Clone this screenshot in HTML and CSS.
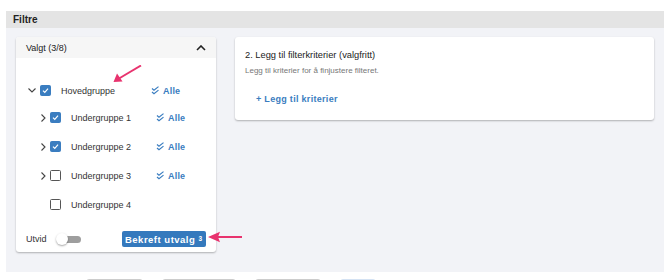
FILE: index.html
```html
<!DOCTYPE html>
<html lang="en">
<head>
    <meta charset="UTF-8">
    <meta name="viewport" content="width=device-width, initial-scale=1.0">
    <title>Filtre</title>
    <link rel="stylesheet" href="styles.css">
</head>
<body>

<div class="page">
    <!-- Section header -->
    <div class="section-title">Filtre</div>

    <div class="panel">
        <!-- Left: group selection -->
        <div class="card select-card">
            <div class="select-head">
                <span>Valgt (3/8)</span>
                <svg class="head-chevron" viewBox="0 0 10 6" width="10" height="6"><path d="M1 5 L5 1 L9 5" fill="none" stroke="#222" stroke-width="1.6"/></svg>
            </div>

            <div class="tree">
                <div class="row main-row">
                    <svg class="chev" viewBox="0 0 8 5" width="8" height="5"><path d="M0.5 0.5 L4 4 L7.5 0.5" fill="none" stroke="#444" stroke-width="1.1"/></svg>
                    <span class="box checked"><svg viewBox="0 0 10 10"><path d="M2.2 5.2 L4.2 7.2 L7.8 3" fill="none" stroke="#fff" stroke-width="1.3"/></svg></span>
                    <span class="label">Hovedgruppe</span>
                    <span class="all"><svg viewBox="0 0 9 9" width="9" height="9"><path d="M1 2.5 L3 4.3 L7.5 0.6 M1 6 L3 7.8 L7.5 4.1" fill="none" stroke="#3a7dc0" stroke-width="1.2"/></svg>Alle</span>
                </div>
                <div class="row sub-row">
                    <svg class="chev" viewBox="0 0 5 8" width="5" height="8"><path d="M0.5 0.5 L4 4 L0.5 7.5" fill="none" stroke="#444" stroke-width="1.1"/></svg>
                    <span class="box checked"><svg viewBox="0 0 10 10"><path d="M2.2 5.2 L4.2 7.2 L7.8 3" fill="none" stroke="#fff" stroke-width="1.3"/></svg></span>
                    <span class="label">Undergruppe 1</span>
                    <span class="all"><svg viewBox="0 0 9 9" width="9" height="9"><path d="M1 2.5 L3 4.3 L7.5 0.6 M1 6 L3 7.8 L7.5 4.1" fill="none" stroke="#3a7dc0" stroke-width="1.2"/></svg>Alle</span>
                </div>
                <div class="row sub-row">
                    <svg class="chev" viewBox="0 0 5 8" width="5" height="8"><path d="M0.5 0.5 L4 4 L0.5 7.5" fill="none" stroke="#444" stroke-width="1.1"/></svg>
                    <span class="box checked"><svg viewBox="0 0 10 10"><path d="M2.2 5.2 L4.2 7.2 L7.8 3" fill="none" stroke="#fff" stroke-width="1.3"/></svg></span>
                    <span class="label">Undergruppe 2</span>
                    <span class="all"><svg viewBox="0 0 9 9" width="9" height="9"><path d="M1 2.5 L3 4.3 L7.5 0.6 M1 6 L3 7.8 L7.5 4.1" fill="none" stroke="#3a7dc0" stroke-width="1.2"/></svg>Alle</span>
                </div>
                <div class="row sub-row">
                    <svg class="chev" viewBox="0 0 5 8" width="5" height="8"><path d="M0.5 0.5 L4 4 L0.5 7.5" fill="none" stroke="#444" stroke-width="1.1"/></svg>
                    <span class="box"></span>
                    <span class="label">Undergruppe 3</span>
                    <span class="all"><svg viewBox="0 0 9 9" width="9" height="9"><path d="M1 2.5 L3 4.3 L7.5 0.6 M1 6 L3 7.8 L7.5 4.1" fill="none" stroke="#3a7dc0" stroke-width="1.2"/></svg>Alle</span>
                </div>
                <div class="row sub-row">
                    <span class="chev-space"></span>
                    <span class="box"></span>
                    <span class="label">Undergruppe 4</span>
                </div>
            </div>

            <div class="select-foot">
                <span class="expand-label">Utvid</span>
                <span class="toggle"><span class="knob"></span></span>
                <button class="confirm">Bekreft utvalg <sup>3</sup></button>
            </div>

            <!-- pointer arrows -->
            <svg class="arrow arrow-top" viewBox="0 0 30 20" width="30" height="20"><path d="M29 0.5 L7 13.5" stroke="#e8336e" stroke-width="2" fill="none"/><path d="M1.5 17 L5 8.5 L10.5 16.5 Z" fill="#e8336e"/></svg>
            <svg class="arrow arrow-side" viewBox="0 0 36 12" width="36" height="12"><path d="M35 6 L10 6" stroke="#e8336e" stroke-width="2" fill="none"/><path d="M1 6 L13 0.8 L11 6 L13 11.2 Z" fill="#e8336e"/></svg>
        </div>

        <!-- Right: criteria -->
        <div class="card criteria-card">
            <div class="criteria-title">2. Legg til filterkriterier (valgfritt)</div>
            <div class="criteria-sub">Legg til kriterier for å finjustere filteret.</div>
            <div class="add-link">+ Legg til kriterier</div>
        </div>
    </div>

    <!-- bottom buttons (cut off) -->
    <div class="bottom-bar">
        <span class="ghost g1"></span>
        <span class="ghost g2"></span>
        <span class="ghost g3"></span>
        <span class="ghost g4"></span>
    </div>
</div>

</body>
</html>
```

FILE: styles.css
```css
body {
    margin: 0;
    background: #fff;
    font-family: "Liberation Sans", Arial, sans-serif;
    color: #333;
}

.page {
    padding: 11px 6px 0 6px;
    width: 658px;
}

.section-title {
    height: 17px;
    line-height: 17px;
    background: #e4e4e4;
    padding-left: 7px;
    font-size: 10px;
    font-weight: bold;
    color: #222;
}

.panel {
    background: #f2f3f7;
    height: 244px;
    box-sizing: border-box;
    padding: 9px 10px 0 10px;
    display: flex;
    align-items: flex-start;
    gap: 19px;
}

.card {
    background: #fff;
    border-radius: 3px;
    box-shadow: 0 1px 2px rgba(0, 0, 0, 0.28);
}

/* Selection card */
.select-card {
    position: relative;
    width: 200px;
    height: 215px;
    flex-shrink: 0;
}

.select-head {
    height: 21px;
    background: #f6f6f6;
    border-radius: 3px 3px 0 0;
    display: flex;
    align-items: center;
    justify-content: space-between;
    padding: 0 10px;
    font-size: 9px;
    color: #222;
}

.tree {
    padding-top: 20px;
}

.row {
    height: 29px;
    display: flex;
    align-items: center;
    font-size: 9px;
    color: #333;
}

.main-row {
    padding-left: 12px;
    height: 25px;
}

.sub-row {
    padding-left: 25px;
}

.chev {
    width: 8px;
    flex-shrink: 0;
}

.sub-row .chev {
    width: 5px;
    margin-right: 4px;
}

.main-row .chev {
    margin-right: 4px;
}

.chev-space {
    width: 9px;
}

.box {
    width: 9px;
    height: 9px;
    border: 1.5px solid #555;
    border-radius: 1.5px;
    display: inline-flex;
    flex-shrink: 0;
}

.box.checked {
    background: #3a7dc0;
    border-color: #3a7dc0;
}

.box svg {
    width: 9px;
    height: 9px;
}

.label {
    margin-left: 10px;
    width: 85px;
}

.main-row .label {
    width: 90px;
}

.all {
    display: flex;
    align-items: center;
    gap: 3px;
    color: #3a7dc0;
    font-weight: bold;
    letter-spacing: 0.2px;
}

.select-foot {
    display: flex;
    align-items: center;
    padding: 12px 0 0 10px;
    font-size: 9px;
}

.expand-label {
    color: #333;
}

.toggle {
    position: relative;
    width: 19px;
    height: 7px;
    background: #9e9e9e;
    border-radius: 4px;
    margin-left: 15px;
}

.knob {
    position: absolute;
    left: -6px;
    top: -3px;
    width: 12px;
    height: 12px;
    border-radius: 50%;
    background: #fff;
    box-shadow: 0 1px 2px rgba(0, 0, 0, 0.35);
}

.confirm {
    margin-left: 41px;
    height: 16px;
    width: 84px;
    padding: 0;
    border: none;
    border-radius: 2px;
    background: #3479bd;
    color: #fff;
    font-family: inherit;
    font-size: 9.5px;
    font-weight: bold;
    letter-spacing: 0.5px;
}

.confirm sup {
    font-size: 6.5px;
    vertical-align: 2px;
    letter-spacing: 0;
}

.arrow {
    position: absolute;
}

.arrow-top {
    left: 96px;
    top: 28px;
}

.arrow-side {
    left: 191px;
    top: 194px;
}

/* Criteria card */
.criteria-card {
    flex: 1;
    height: 83px;
    box-sizing: border-box;
    padding: 13px 10px 0 10px;
}

.criteria-title {
    font-size: 9.3px;
    color: #222;
}

.criteria-sub {
    margin-top: 6px;
    font-size: 8px;
    color: #777;
}

.add-link {
    margin-top: 19px;
    margin-left: 11px;
    font-size: 9px;
    font-weight: bold;
    color: #3a7dc0;
    letter-spacing: 0.3px;
}

/* Cut off buttons at the bottom */
.bottom-bar {
    display: flex;
    padding-top: 7px;
    height: 8px;
}

.ghost {
    height: 8px;
    border: 1px solid #ccc;
    border-radius: 3px;
    background: #fafafa;
    margin-right: 19px;
}

.g1 { width: 55px; margin-left: 80px; }
.g2 { width: 72px; }
.g3 { width: 64px; }
.g4 { width: 34px; border-color: #d4e2f3; background: #eef4fb; }
```
